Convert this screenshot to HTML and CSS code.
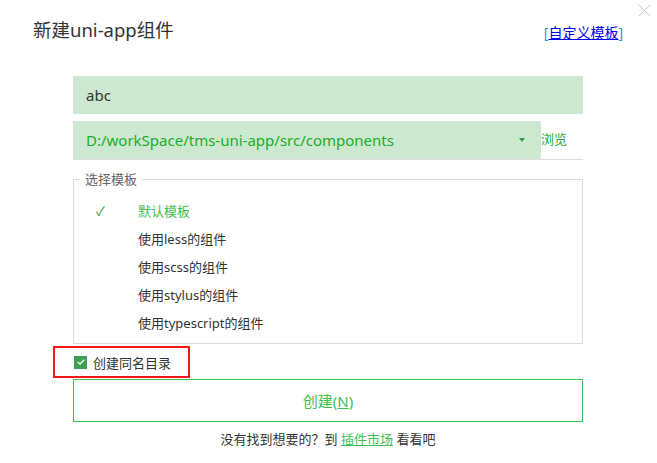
FILE: index.html
```html
<!DOCTYPE html>
<html lang="zh-CN">
  <head>
    <meta charset="UTF-8" />
    <title>新建uni-app组件</title>
    <link rel="stylesheet" href="styles.css">
  </head>
  <body>
    <div class="dialog">
      <span class="close">
        <svg width="13" height="13" viewBox="0 0 13 13">
          <path d="M0.5 0.5 L12.5 12.5 M12.5 0.5 L0.5 12.5" stroke="#c8c8c8" stroke-width="1" fill="none" />
        </svg>
      </span>

      <div class="header">
        <h1>新建uni-app组件</h1>
        <span class="custom">[<a href="#">自定义模板</a>]</span>
      </div>

      <div class="form">
        <div class="field name">abc</div>

        <div class="path-row">
          <div class="field path">
            <span>D:/workSpace/tms-uni-app/src/components</span>
            <span class="arrow"></span>
          </div>
          <a class="browse" href="#">浏览</a>
        </div>

        <fieldset class="templates">
          <legend>选择模板</legend>
          <ul>
            <li class="active"><span class="tick">&#10003;</span>默认模板</li>
            <li><span class="tick"></span>使用less的组件</li>
            <li><span class="tick"></span>使用scss的组件</li>
            <li><span class="tick"></span>使用stylus的组件</li>
            <li><span class="tick"></span>使用typescript的组件</li>
          </ul>
        </fieldset>
      </div>

      <div class="same-dir">
        <span class="checkbox">
          <svg width="8" height="6" viewBox="0 0 8 6">
            <path d="M0.8 3 L3 5 L7.2 0.8" stroke="#fff" stroke-width="1.3" fill="none" />
          </svg>
        </span>
        创建同名目录
      </div>

      <div class="form">
        <button class="create">创建(<u>N</u>)</button>
        <p class="footer">没有找到想要的？到 <a href="#">插件市场</a> 看看吧</p>
      </div>
    </div>
  </body>
</html>
```

FILE: styles.css
```css
* {
  margin: 0;
  padding: 0;
  box-sizing: border-box;
}
body {
  font-family: "Noto Sans", "Noto Sans CJK SC", sans-serif;
  font-size: 13px;
  color: #333;
  background: #fff;
  width: 657px;
  height: 463px;
  overflow: hidden;
}
.dialog {
  position: relative;
  padding-top: 14px;
}
.close {
  position: absolute;
  top: 4px;
  right: 6px;
  line-height: 0;
}
.header {
  display: flex;
  justify-content: space-between;
  align-items: flex-end;
  padding: 0 34px 0 33px;
  height: 32px;
}
h1 {
  font-size: 18.5px;
  font-weight: normal;
  color: #333;
  line-height: 32px;
}
.custom {
  color: #2a9bd8;
  font-size: 14px;
  line-height: 20px;
  margin-bottom: 3px;
}
.custom a {
  color: #0000ee;
}
.form {
  width: 510px;
  margin-left: 73px;
}
.field {
  background: #cde8d0;
  height: 38px;
  display: flex;
  align-items: center;
  padding-left: 13px;
  font-size: 15px;
}
.name {
  margin-top: 30px;
}
.path-row {
  display: flex;
  align-items: center;
  margin-top: 7px;
  border-bottom: 1px solid #ddd;
}
.path {
  width: 468px;
  color: #1aad2b;
  justify-content: space-between;
  padding-right: 16px;
}
.arrow {
  border-left: 3px solid transparent;
  border-right: 3px solid transparent;
  border-top: 4px solid #3a9a50;
}
.browse {
  color: #1aad2b;
  text-decoration: none;
  font-size: 13px;
  margin-bottom: 3px;
}
.templates {
  margin-top: 12px;
  border: 1px solid #dcdcdc;
  padding: 10px 0 6px 22px;
  height: 172px;
}
legend {
  color: #666;
  margin-left: -16px;
  padding: 0 5px;
  line-height: 14px;
}
ul {
  list-style: none;
}
li {
  height: 28px;
  display: flex;
  align-items: center;
}
.tick {
  width: 42px;
  color: #3a9a50;
  font-size: 13px;
}
.active {
  color: #3cc051;
}
.same-dir {
  display: flex;
  align-items: center;
  width: 137px;
  height: 32px;
  margin: 2px 0 0 53px;
  border: 2px solid #f01818;
  padding-left: 19px;
}
.checkbox {
  width: 13px;
  height: 13px;
  background: #3e9e56;
  display: inline-flex;
  align-items: center;
  justify-content: center;
  margin-right: 6px;
}
.create {
  display: block;
  width: 510px;
  height: 43px;
  margin-top: 1px;
  background: #fff;
  border: 1px solid #3cc051;
  color: #3cc051;
  font-family: inherit;
  font-size: 15px;
}
.footer {
  text-align: center;
  margin-top: 7px;
  line-height: 20px;
}
.footer a {
  color: #3cc051;
}
```
